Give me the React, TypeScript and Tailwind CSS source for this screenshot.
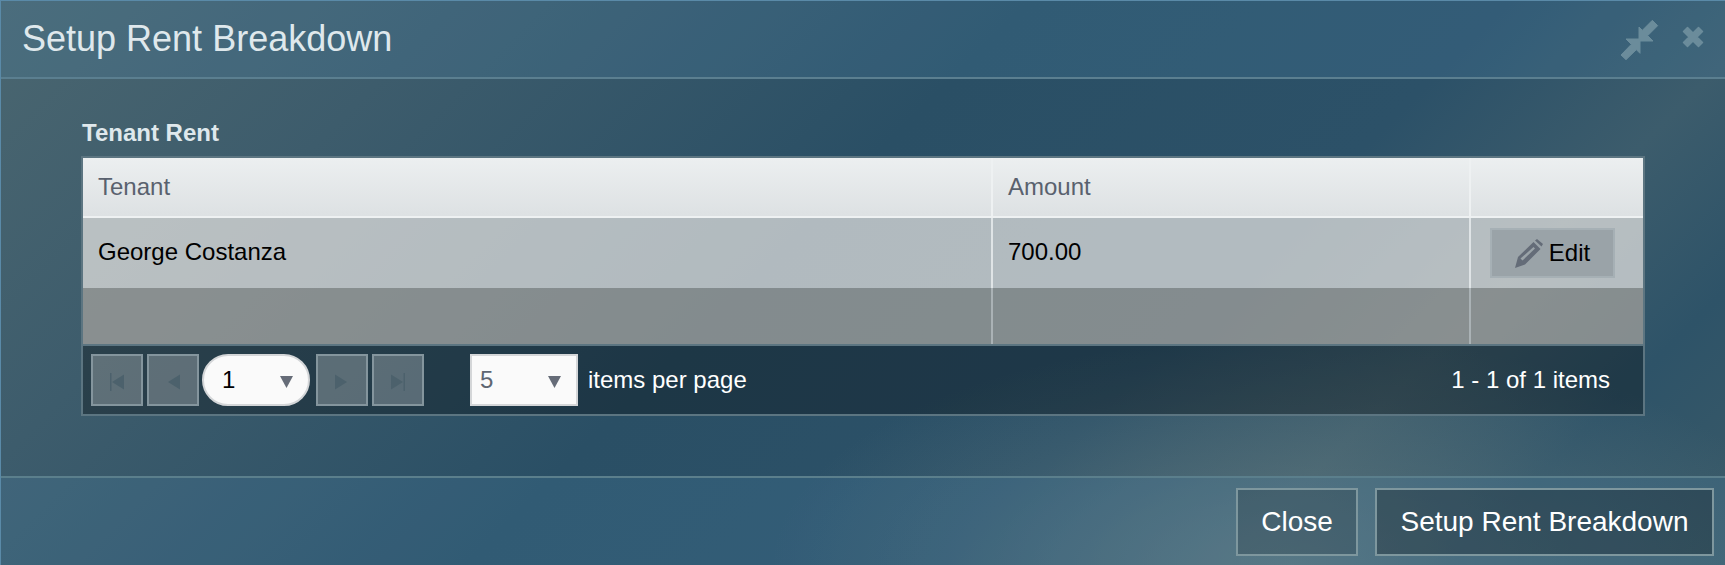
import React from "react";

function Tri({ dir, bar }: { dir: "l" | "r"; bar?: boolean }) {
  return (
    <svg width="14" height="18" viewBox="0 0 14 18" className="text-[#4c616c] relative top-[2px]" fill="currentColor">
      {dir === "l" ? <polygon points="14,1.500 14,16.500 2,9" /> : <polygon points="0,1.500 0,16.500 12,9" />}
      {bar && (dir === "l" ? <rect x="0" y="0" width="1.500" height="18" /> : <rect x="12.500" y="0" width="1.500" height="18" />)}
    </svg>
  );
}

function PagerBtn({ children }: { children: React.ReactNode }) {
  return (
    <div className="w-[52px] h-[52px] border-2 border-[#84959d] bg-[rgba(255,255,255,0.25)] flex items-center justify-center">
      {children}
    </div>
  );
}

function Caret() {
  return (
    <svg width="13" height="12" viewBox="0 0 13 12" className="text-[#666c78] relative top-[2px]" fill="currentColor">
      <polygon points="0,0 13,0 6.500,12" />
    </svg>
  );
}

export default function App() {
  return (
    <div className="w-[1725px] h-[565px] overflow-hidden flex flex-col font-['Liberation_Sans',sans-serif] border-t border-l border-[#5a8aa8] bg-[radial-gradient(ellipse_520px_230px_at_1290px_565px,rgba(115,135,135,0.55),transparent),linear-gradient(135deg,#4a6670_0%,#3d5c6c_20%,#2a4f65_45%,#2c5168_66%,#3c5c6c_78%,#2e5368_88%,#3a5a68_100%)]">
      <div className="h-[78px] shrink-0 bg-[rgba(80,140,180,0.2)] border-b-2 border-[#5b7f90] flex items-center justify-between pl-[21px] pr-[20px]">
        <span className="text-[36px] leading-none text-[#dfe8ec]">Setup Rent Breakdown</span>
        <div className="flex items-center gap-[21px]">
          <svg width="40" height="42" viewBox="585 60 120 126" fill="#6b8c9b" className="relative top-[1px]">
            <path d="M642 84 L642 126 L684 126 L668 110 L698 80 L682 64 L652 94 Z" stroke="#6b8c9b" strokeWidth="3" strokeLinejoin="round" />
            <path d="M645 120 L603 120 L619 136 L588 168 L603 182 L634 152 L645 163 Z" stroke="#6b8c9b" strokeWidth="3" strokeLinejoin="round" />
          </svg>
          <svg width="24" height="24" viewBox="0 0 24 24" fill="#6b8c9b" className="relative top-[-2px]">
            <path d="M2.500 6.500 L6.500 2.500 L12 8 L17.500 2.500 L21.500 6.500 L16 12 L21.500 17.500 L17.500 21.500 L12 16 L6.500 21.500 L2.500 17.500 L8 12 Z" stroke="#6b8c9b" strokeWidth="1.500" strokeLinejoin="round" />
          </svg>
        </div>
      </div>

      <div className="flex-1 px-[80px] pt-[40px]">
        <div className="text-[24px] leading-[27px] font-bold text-[#dfe8ec] mb-[10px] ml-[1px]">Tenant Rent</div>
        <div className="border-2 border-[#5c7581] w-[1564px]">
          <div className="grid grid-cols-[910px_478px_172px] h-[58px] bg-[linear-gradient(#eceff0,#dde1e3)]">
            <div className="border-r-2 border-[#eef1f2] pl-[15px] flex items-center text-[24px] text-[#59616e]">Tenant</div>
            <div className="border-r-2 border-[#eef1f2] pl-[15px] flex items-center text-[24px] text-[#59616e]">Amount</div>
            <div />
          </div>
          <div className="h-[2px] bg-[#eef1f2]" />
          <div className="grid grid-cols-[910px_478px_172px] h-[70px] bg-[rgba(250,245,240,0.65)]">
            <div className="border-r-2 border-[#dfe4e6] pl-[15px] pb-[2px] flex items-center text-[24px] text-black">George Costanza</div>
            <div className="border-r-2 border-[#dfe4e6] pl-[15px] pb-[2px] flex items-center text-[24px] text-black">700.00</div>
            <div className="pl-[19px] flex items-center">
              <div className="w-[125px] h-[50px] bg-[#9aa3a8] border-2 border-[#a6b0b5] flex items-center justify-center gap-[6px] text-[24px] text-black">
                <svg width="28" height="29" viewBox="0 0 28 29" fill="#646c78">
                  <path d="M0 29 L3 18 L18.500 3 L25.500 10 L10 25.500 Z M5.500 19.500 L7.500 21.500 L20 9.500 L18.500 8 Z" fillRule="evenodd" />
                  <path d="M20 1.500 L22 0 L28 5 L26.500 7.500 Z" />
                </svg>
                Edit
              </div>
            </div>
          </div>
          <div className="grid grid-cols-[910px_478px_172px] h-[56px] bg-[rgba(170,165,160,0.7)]">
            <div className="border-r-2 border-[#aab2b5]" />
            <div className="border-r-2 border-[#aab2b5]" />
            <div />
          </div>
          <div className="h-[2px] bg-[#5c7581]" />
          <div className="h-[68px] bg-black/30 flex items-center pl-[8px] pr-[33px] text-[24px] text-white">
            <div className="flex items-center gap-[4px]">
              <PagerBtn><Tri dir="l" bar /></PagerBtn>
              <PagerBtn><Tri dir="l" /></PagerBtn>
            </div>
            <div className="ml-[3px] w-[108px] h-[52px] rounded-[26px] bg-[#fafafa] border-2 border-[#d4d6d8] flex items-center justify-between pl-[18px] pr-[15px] text-black">
              <span>1</span>
              <Caret />
            </div>
            <div className="ml-[6px] flex items-center gap-[4px]">
              <PagerBtn><Tri dir="r" /></PagerBtn>
              <PagerBtn><Tri dir="r" bar /></PagerBtn>
            </div>
            <div className="ml-[46px] w-[108px] h-[52px] bg-[#fafafa] border-2 border-[#d4d6d8] flex items-center justify-between pl-[8px] pr-[15px] text-[#5e6672]">
              <span>5</span>
              <Caret />
            </div>
            <span className="ml-[10px]">items per page</span>
            <span className="ml-auto">1 - 1 of 1 items</span>
          </div>
        </div>
      </div>

      <div className="h-[89px] shrink-0 bg-[rgba(80,140,180,0.2)] border-t-2 border-[#5b7f8c] flex justify-end gap-[17px] pr-[11px] pt-[10px] text-[28px] text-white">
        <div className="w-[122px] h-[68px] border-2 border-[#7e979e] bg-black/15 flex items-center justify-center">Close</div>
        <div className="w-[339px] h-[68px] border-2 border-[#7e979e] bg-black/25 flex items-center justify-center">Setup Rent Breakdown</div>
      </div>
    </div>
  );
}
